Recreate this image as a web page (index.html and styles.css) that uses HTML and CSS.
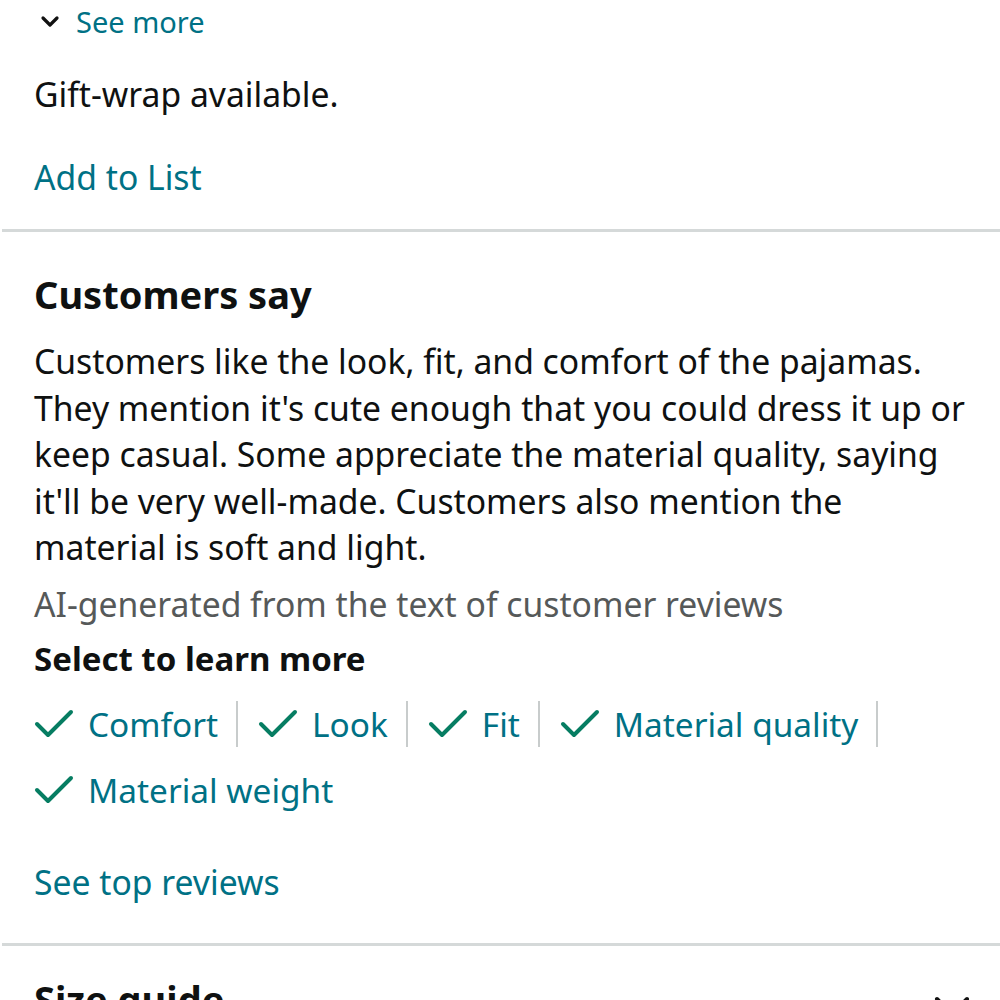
FILE: index.html
```html
<!doctype html>
<html>
<head>
<meta charset="utf-8">
<title>Customers say</title>
<link rel="stylesheet" href="styles.css">
</head>
<body>

<section class="block top">
  <a class="see-more" href="#">
    <svg class="chev" viewBox="0 0 20 14" width="20" height="14"><path d="M3 3 L10 10 L17 3" fill="none" stroke="#111" stroke-width="3.2" stroke-linecap="round" stroke-linejoin="round"/></svg>
    See more
  </a>
  <p class="plain gift">Gift-wrap available.</p>
  <a class="link add-list" href="#">Add to List</a>
</section>

<hr class="divider">

<section class="block say">
  <h2 class="heading">Customers say</h2>
  <p class="plain summary">Customers like the look, fit, and comfort of the pajamas. They mention it's cute enough that you could dress it up or keep casual. Some appreciate the material quality, saying it'll be very well-made. Customers also mention the material is soft and light.</p>
  <p class="note">AI-generated from the text of customer reviews</p>
  <h3 class="sub">Select to learn more</h3>

  <ul class="chips">
    <li class="chip"><svg class="tick" viewBox="0 0 40 32"><path d="M3 16 L14 27 L37 4" fill="none" stroke="#067d62" stroke-width="4" stroke-linecap="round" stroke-linejoin="round"/></svg>Comfort</li>
    <li class="chip"><svg class="tick" viewBox="0 0 40 32"><path d="M3 16 L14 27 L37 4" fill="none" stroke="#067d62" stroke-width="4" stroke-linecap="round" stroke-linejoin="round"/></svg>Look</li>
    <li class="chip"><svg class="tick" viewBox="0 0 40 32"><path d="M3 16 L14 27 L37 4" fill="none" stroke="#067d62" stroke-width="4" stroke-linecap="round" stroke-linejoin="round"/></svg>Fit</li>
    <li class="chip"><svg class="tick" viewBox="0 0 40 32"><path d="M3 16 L14 27 L37 4" fill="none" stroke="#067d62" stroke-width="4" stroke-linecap="round" stroke-linejoin="round"/></svg>Material quality</li>
    <li class="chip"><svg class="tick" viewBox="0 0 40 32"><path d="M3 16 L14 27 L37 4" fill="none" stroke="#067d62" stroke-width="4" stroke-linecap="round" stroke-linejoin="round"/></svg>Material weight</li>
  </ul>

  <a class="link top-reviews" href="#">See top reviews</a>
</section>

<hr class="divider">

<section class="block size">
  <h2 class="heading size-head">Size guide
    <svg class="chev-big" viewBox="0 0 36 22" width="36" height="22"><path d="M3 3 L18 18 L33 3" fill="none" stroke="#111" stroke-width="4" stroke-linecap="round" stroke-linejoin="round"/></svg>
  </h2>
</section>

</body>
</html>
```

FILE: styles.css
```css
/* ---------- page ---------- */
html,body{margin:0;background:#fff}
body{
  font-family:"Noto Sans","Open Sans",sans-serif;
  font-size:33.7px;
  color:#0f1111;
  overflow:hidden;
  height:1000px;
}

a{text-decoration:none}

.block{padding:0 34px}

/* ---------- top bit ---------- */
.top{padding-top:4px;padding-bottom:29px}

.see-more{
  display:flex;align-items:center;gap:16px;
  color:#007185;
  font-size:29px;
  margin-left:6px;
  line-height:36px;
}
.chev{display:block;width:20px;height:14px}

.plain{margin:0;line-height:46.5px}
.gift{margin-top:31px;line-height:46px}

.link{color:#007185;display:block;line-height:46px}
.add-list{margin-top:37px}

/* ---------- dividers ---------- */
.divider{
  border:0;
  height:3px;
  background:#d5d9d9;
  margin:0 0 0 2px;
}

/* ---------- customers say ---------- */
.say{padding-top:39px;padding-bottom:38px}

.heading{
  margin:0;
  font-size:38px;
  font-weight:700;
  line-height:46px;
}
.summary{margin-top:21px}

.note{
  margin:10px 0 0;
  color:#565959;
  line-height:46px;
}

.sub{
  margin:9px 0 0;
  font-size:33px;
  font-weight:700;
  line-height:46px;
}

.chips{
  list-style:none;
  margin:19px 0 0;padding:0;
  display:flex;flex-wrap:wrap;
  row-gap:20px;
}
.chip{
  display:flex;align-items:center;
  color:#007185;
  font-size:33.4px;
  line-height:46px;
  padding-right:18px;
  margin-right:20px;
  border-right:2px solid #c8cccc;
}
.chip:last-child{border-right:0}
.tick{width:40px;height:32px;margin-right:14px;flex:none}

.top-reviews{margin-top:46px}

/* ---------- size guide ---------- */
.size{padding-top:30px}
.size-head{display:flex;justify-content:space-between;align-items:flex-start}
.chev-big{display:block;margin-top:20px;margin-right:-4px}
```
